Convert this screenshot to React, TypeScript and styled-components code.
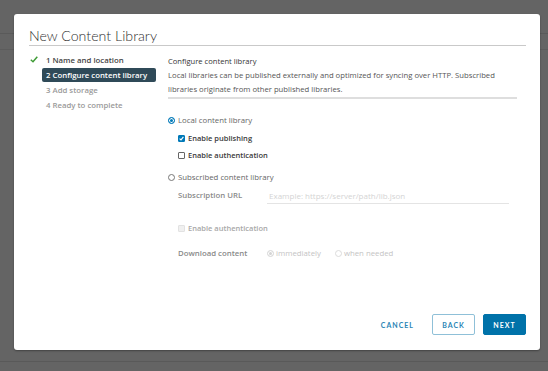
import React from "react";
import styled, { createGlobalStyle } from "styled-components";

const Global = createGlobalStyle`
  html, body { margin: 0; padding: 0; }
  body { width: 548px; height: 371px; overflow: hidden; font-family: "Open Sans", Lato, sans-serif; }
  * { box-sizing: border-box; }
`;

const Backdrop = styled.div`
  width: 548px;
  height: 371px;
  background-color: #646464;
  background-image:
    linear-gradient(#5a5a5a, #5a5a5a),
    linear-gradient(#5c5c5c, #5c5c5c),
    linear-gradient(#595959, #595959);
  background-size: 548px 1px, 548px 1px, 548px 1px;
  background-position: 0 33px, 0 49px, 0 361px;
  background-repeat: no-repeat;
  padding: 14px 8px 21px 14px;
  display: flex;
`;

const Modal = styled.div`
  width: 526px;
  height: 336px;
  background: #fff;
  border-radius: 3px;
  box-shadow: 0 1px 2px rgba(0,0,0,0.35);
  padding: 12px 14px 15px 15px;
  display: flex;
  flex-direction: column;
`;

const Title = styled.h1`
  margin: 0;
  font-family: Lato, sans-serif;
  font-weight: 300;
  font-size: 14.2px;
  line-height: 19px;
  color: #313131;
  border-bottom: 1px solid #c9c9c9;
`;

const Body = styled.div`
  display: flex;
  flex: 1;
  padding-top: 7px;
`;

const Nav = styled.ul`
  list-style: none;
  margin: 0;
  padding: 0 0 0 4px;
  width: 139px;
  display: flex;
  flex-direction: column;
  gap: 1px;
`;

const NavItem = styled.li<{ $state: "done" | "active" | "todo" }>`
  position: relative;
  height: 14px;
  line-height: 14px;
  font-size: 7.8px;
  font-weight: 600;
  padding-left: 4px;
  margin-left: 9px;
  width: 114px;
  border-radius: 2px;
  white-space: nowrap;
  color: ${(p) => (p.$state === "active" ? "#fff" : p.$state === "done" ? "#454545" : "#9a9a9a")};
  background: ${(p) => (p.$state === "active" ? "#2f4a58" : "transparent")};
`;

const Check = styled.svg`
  position: absolute;
  left: -12px;
  top: 3px;
`;

const Content = styled.div`
  flex: 1;
  display: flex;
  flex-direction: column;
  padding-right: 9px;
  margin-top: 1px;
`;

const Heading = styled.div`
  font-size: 7.6px;
  font-weight: 500;
  color: #333;
  line-height: 14px;
`;

const Desc = styled.p`
  margin: 0;
  font-size: 7.7px;
  color: #565656;
  line-height: 14px;
  padding-bottom: 1px;
  border-bottom: 2px solid #dedede;
`;

const Form = styled.div`
  display: flex;
  flex-direction: column;
  padding-top: 14px;
`;

const Row = styled.label<{ $indent?: boolean; $mt?: number; $disabled?: boolean }>`
  display: flex;
  align-items: center;
  height: 14px;
  margin-top: ${(p) => p.$mt ?? 0}px;
  padding-left: ${(p) => (p.$indent ? 10 : 0)}px;
  font-size: ${(p) => (p.$indent ? 7.5 : 7.8)}px;
  font-weight: ${(p) => (p.$indent ? 600 : 400)};
  color: ${(p) => (p.$disabled ? "#a8a8a8" : p.$indent ? "#3a3a3a" : "#666")};
  gap: 3px;
`;

const RadioDot = styled.span<{ $on?: boolean; $disabled?: boolean }>`
  width: 7px;
  height: 7px;
  border-radius: 50%;
  border: 1px solid ${(p) => (p.$disabled ? "#dcdcdc" : p.$on ? "#0079b8" : "#777")};
  background: ${(p) => (p.$on ? (p.$disabled ? "#d4d4d4" : "#0079b8") : "#fff")};
  box-shadow: ${(p) => (p.$on ? "inset 0 0 0 1px #fff" : "none")};
  flex-shrink: 0;
`;

const Box = styled.span<{ $on?: boolean; $disabled?: boolean }>`
  width: 7px;
  height: 7px;
  border-radius: 1px;
  border: 1px solid ${(p) => (p.$disabled ? "#e2e2e2" : p.$on ? "#0079b8" : "#666")};
  background: ${(p) => (p.$on ? "#0079b8" : p.$disabled ? "#f0f0f0" : "#fff")};
  display: flex;
  align-items: center;
  justify-content: center;
  flex-shrink: 0;
`;

const FieldRow = styled.div<{ $mt?: number }>`
  display: flex;
  align-items: center;
  padding-left: 10px;
  margin-top: ${(p) => p.$mt ?? 0}px;
  height: 14px;
`;

const FieldLabel = styled.span`
  width: 89px;
  font-size: 7.8px;
  color: #8a8a8a;
  font-weight: 600;
`;

const Input = styled.div`
  width: 242px;
  height: 14px;
  line-height: 12px;
  border-bottom: 1px solid #e4e4e4;
  font-size: 8px;
  color: #d4d4d4;
  padding-left: 2px;
  margin-top: 4px;
`;

const Option = styled.span`
  display: flex;
  align-items: center;
  gap: 2px;
  font-size: 7.8px;
  color: #c4c4c4;
  margin-right: 14px;
`;

const Footer = styled.div`
  display: flex;
  justify-content: flex-end;
  align-items: center;
  gap: 8px;
`;

const Button = styled.button<{ $kind: "link" | "outline" | "primary" }>`
  height: 21px;
  min-width: 43px;
  padding: 0 9px;
  border-radius: 2px;
  font-family: Lato, sans-serif;
  font-size: 7px;
  font-weight: 700;
  letter-spacing: 1px;
  cursor: pointer;
  border: 1px solid ${(p) => (p.$kind === "outline" ? "#8fc0d8" : p.$kind === "primary" ? "#0072a9" : "transparent")};
  background: ${(p) => (p.$kind === "primary" ? "#0072a9" : "#fff")};
  color: ${(p) => (p.$kind === "primary" ? "#fff" : "#2a85b5")};
`;

export default function App() {
  return (
    <>
      <Global />
      <Backdrop>
        <Modal>
          <Title>New Content Library</Title>
          <Body>
            <Nav>
              <NavItem $state="done">
                <Check width="8" height="7" viewBox="0 0 8 7">
                  <path d="M0.8 3.8 L3 5.8 L7.3 0.8" fill="none" stroke="#3e9b35" strokeWidth="1.5" />
                </Check>
                1 Name and location
              </NavItem>
              <NavItem $state="active">2 Configure content library</NavItem>
              <NavItem $state="todo">3 Add storage</NavItem>
              <NavItem $state="todo">4 Ready to complete</NavItem>
            </Nav>
            <Content>
              <Heading>Configure content library</Heading>
              <Desc>
                Local libraries can be published externally and optimized for syncing over HTTP. Subscribed libraries
                originate from other published libraries.
              </Desc>
              <Form>
                <Row>
                  <RadioDot $on />
                  Local content library
                </Row>
                <Row $indent $mt={4}>
                  <Box $on>
                    <svg width="5" height="5" viewBox="0 0 5 5">
                      <path d="M0.6 2.6 L2 3.9 L4.4 0.9" fill="none" stroke="#fff" strokeWidth="1.1" />
                    </svg>
                  </Box>
                  Enable publishing
                </Row>
                <Row $indent $mt={3}>
                  <Box />
                  Enable authentication
                </Row>
                <Row $mt={8}>
                  <RadioDot />
                  Subscribed content library
                </Row>
                <FieldRow $mt={4}>
                  <FieldLabel>Subscription URL</FieldLabel>
                  <Input>Example: https://server/path/lib.json</Input>
                </FieldRow>
                <Row $indent $disabled $mt={19}>
                  <Box $disabled />
                  Enable authentication
                </Row>
                <FieldRow $mt={11}>
                  <FieldLabel>Download content</FieldLabel>
                  <Option>
                    <RadioDot $on $disabled />
                    immediately
                  </Option>
                  <Option>
                    <RadioDot $disabled />
                    when needed
                  </Option>
                </FieldRow>
              </Form>
            </Content>
          </Body>
          <Footer>
            <Button $kind="link">CANCEL</Button>
            <Button $kind="outline">BACK</Button>
            <Button $kind="primary">NEXT</Button>
          </Footer>
        </Modal>
      </Backdrop>
    </>
  );
}
